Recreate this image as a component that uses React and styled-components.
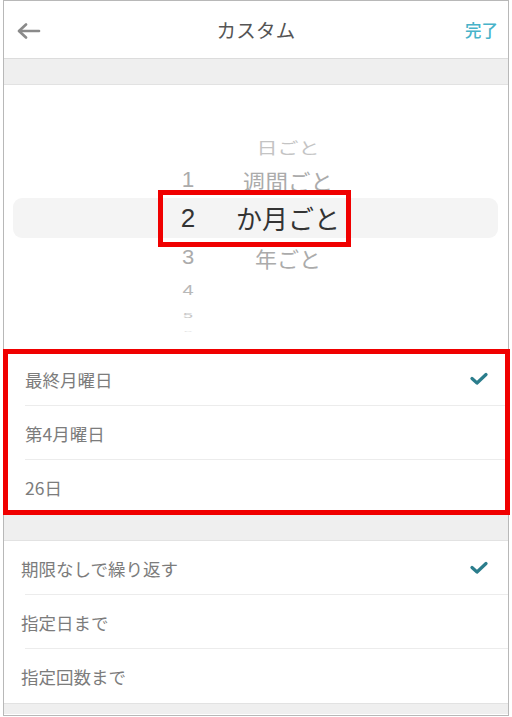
import React from 'react';
import styled, { createGlobalStyle } from 'styled-components';

const GlobalStyle = createGlobalStyle`
  html, body {
    margin: 0;
    padding: 0;
    background: #ffffff;
  }
  body {
    font-family: 'Noto Sans CJK JP', 'Noto Sans', sans-serif;
  }
`;

const wheelRows = [
  { num: '', label: '日ごと', height: 30, size: 21, scale: 0.75, color: '#c4c4c4' },
  { num: '1', label: '週間ごと', height: 36, size: 22.5, scale: 0.95, color: '#ababab' },
  { num: '2', label: 'か月ごと', height: 40, size: 26, scale: 1, color: '#333333', selected: true },
  { num: '3', label: '年ごと', height: 37, size: 22, scale: 0.95, color: '#ababab' },
  { num: '4', label: '', height: 30, size: 20, scale: 0.75, color: '#b8b8b8' },
  { num: '5', label: '', height: 20, size: 18, scale: 0.45, color: '#c8c8c8' },
  { num: '6', label: '', height: 12, size: 16, scale: 0.15, color: '#dddddd' },
];

const dayOptions = [
  { label: '最終月曜日', checked: true },
  { label: '第4月曜日' },
  { label: '26日' },
];

const endOptions = [
  { label: '期限なしで繰り返す', checked: true },
  { label: '指定日まで' },
  { label: '指定回数まで' },
];

function BackArrow() {
  return (
    <svg width="24" height="16" viewBox="0 0 24 16" fill="none">
      <polyline points="9,1.5 2,8 9,14.5" stroke="#8a8a8a" strokeWidth="2.6" strokeLinecap="round" strokeLinejoin="round" />
      <line x1="2.5" y1="8" x2="22" y2="8" stroke="#8a8a8a" strokeWidth="2.6" strokeLinecap="round" />
    </svg>
  );
}

function Check() {
  return (
    <svg width="18" height="14" viewBox="0 0 18 14" fill="none">
      <polyline points="2,6.5 7,11 16,2.5" stroke="#2b7d8c" strokeWidth="3.2" strokeLinecap="round" strokeLinejoin="round" />
    </svg>
  );
}

function OptionList({ options, inset }) {
  return (
    <List>
      {options.map((option, i) => (
        <Option key={i} $inset={inset} $last={i === options.length - 1}>
          <OptionLabel>{option.label}</OptionLabel>
          {option.checked && <Check />}
        </Option>
      ))}
    </List>
  );
}

export default function App() {
  return (
    <>
      <GlobalStyle />
      <Frame>
        <Header>
          <BackButton>
            <BackArrow />
          </BackButton>
          <Title>カスタム</Title>
          <DoneButton>完了</DoneButton>
        </Header>
        <Spacer $height={26} />
        <Picker>
          {wheelRows.map((row, i) => (
            <WheelRow key={i} $height={row.height} $selected={row.selected}>
              <WheelCells>
                <WheelNum $size={row.size} $scale={row.scale} $color={row.color}>
                  {row.num}
                </WheelNum>
                <WheelLabel $size={row.size} $scale={row.scale} $color={row.color}>
                  {row.label}
                </WheelLabel>
                {row.selected && <Callout $top={-8} $bottom={-9} $left={-15} $right={7} />}
              </WheelCells>
            </WheelRow>
          ))}
        </Picker>
        <Marked>
          <OptionList options={dayOptions} inset={21} />
          <Callout $top={-3} $bottom={-1} $left={-1} $right={-2} />
        </Marked>
        <Spacer $height={27} />
        <OptionList options={endOptions} inset={17} />
        <Spacer $height={11} $last />
      </Frame>
    </>
  );
}

const Frame = styled.div`
  box-sizing: border-box;
  width: 506px;
  height: 716px;
  margin-left: 3px;
  border: 1px solid #b8b8b8;
  background: #ffffff;
  display: flex;
  flex-direction: column;
`;

const Header = styled.div`
  height: 57px;
  flex-shrink: 0;
  border-bottom: 1px solid #dcdcdc;
  display: flex;
  align-items: center;
  justify-content: space-between;
  padding: 0 10px 0 13px;
  position: relative;
`;

const BackButton = styled.div`
  display: flex;
  align-items: center;
  padding-top: 3px;
`;

const Title = styled.div`
  position: absolute;
  left: 0;
  right: 0;
  text-align: center;
  font-size: 19.5px;
  color: #555555;
  letter-spacing: 0.3px;
  pointer-events: none;
`;

const DoneButton = styled.div`
  font-size: 16.5px;
  font-weight: 500;
  color: #47b3c9;
`;

const Spacer = styled.div`
  flex-shrink: 0;
  height: ${(p) => p.$height}px;
  background: #efefef;
  border-bottom: ${(p) => (p.$last ? 'none' : '1px solid #e2e2e2')};
  border-top: ${(p) => (p.$last ? '1px solid #e2e2e2' : 'none')};
  box-sizing: border-box;
`;

const Picker = styled.div`
  height: 267px;
  flex-shrink: 0;
  padding-top: 47px;
  box-sizing: border-box;
  display: flex;
  flex-direction: column;
  overflow: hidden;
`;

const WheelRow = styled.div`
  flex-shrink: 0;
  height: ${(p) => p.$height}px;
  margin: 0 10px 0 9px;
  padding-left: 160px;
  display: flex;
  align-items: center;
  border-radius: 9px;
  background: ${(p) => (p.$selected ? '#f4f4f4' : 'transparent')};
`;

const WheelCells = styled.div`
  position: relative;
  height: 100%;
  display: flex;
  align-items: center;
`;

const WheelCell = styled.div`
  font-family: 'Liberation Sans', 'Noto Sans CJK JP', sans-serif;
  font-size: ${(p) => p.$size}px;
  color: ${(p) => p.$color};
  transform: scaleY(${(p) => p.$scale});
  text-align: center;
  line-height: 1;
  white-space: nowrap;
`;

const WheelNum = styled(WheelCell)`
  width: 30px;
`;

const WheelLabel = styled(WheelCell)`
  font-family: 'Noto Sans CJK JP', sans-serif;
  width: 140px;
  margin-left: 15px;
`;

const Callout = styled.div`
  position: absolute;
  top: ${(p) => p.$top}px;
  bottom: ${(p) => p.$bottom}px;
  left: ${(p) => p.$left}px;
  right: ${(p) => p.$right}px;
  border: 5px solid #f00000;
  pointer-events: none;
`;

const Marked = styled.div`
  position: relative;
`;

const List = styled.div`
  flex-shrink: 0;
  background: #ffffff;
`;

const Option = styled.div`
  position: relative;
  height: 54px;
  display: flex;
  align-items: center;
  justify-content: space-between;
  padding: 0 20px 0 ${(p) => p.$inset}px;
  box-sizing: border-box;

  &::after {
    content: '';
    display: ${(p) => (p.$last ? 'none' : 'block')};
    position: absolute;
    left: 21px;
    right: 0;
    bottom: 0;
    height: 1px;
    background: #ececec;
  }
`;

const OptionLabel = styled.div`
  font-size: 17.5px;
  color: #7c7c7c;
`;
